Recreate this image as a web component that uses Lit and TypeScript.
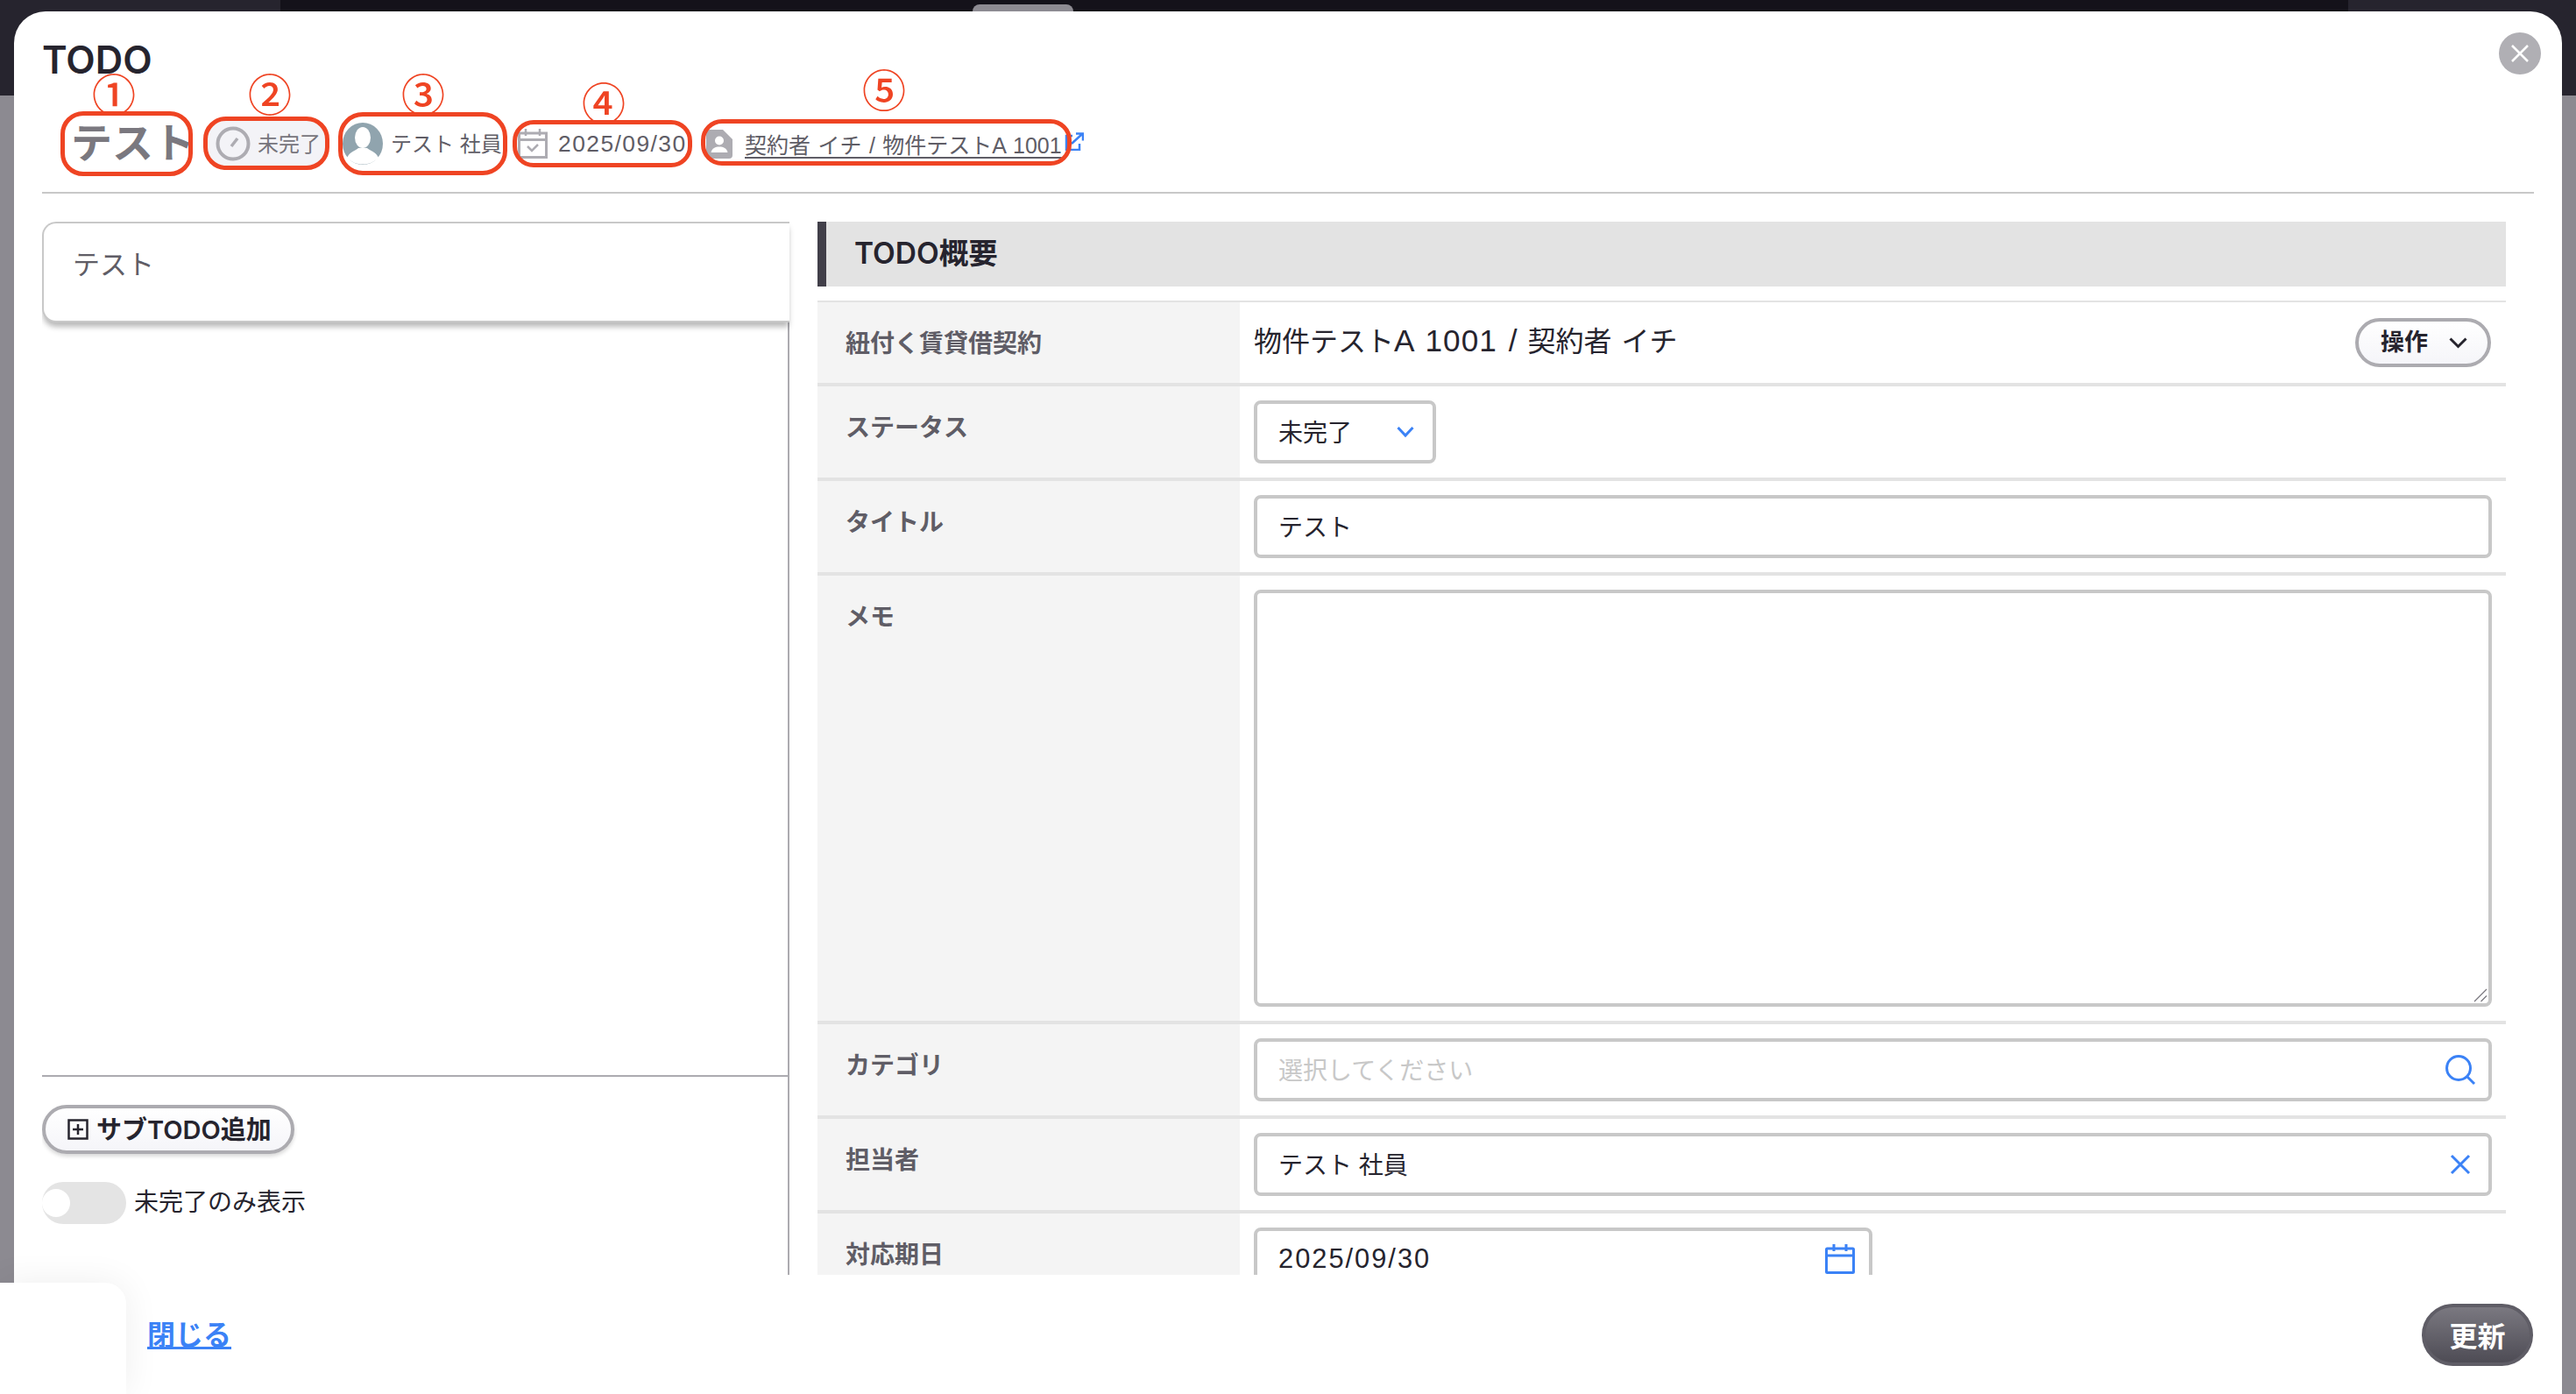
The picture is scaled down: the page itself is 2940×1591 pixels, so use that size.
import { LitElement, html, css, svg } from 'lit';
import { customElement } from 'lit/decorators.js';

const marks = [
  { x: 69, y: 127, w: 151, h: 74, r: 26 },
  { x: 232, y: 133, w: 144, h: 61, r: 26 },
  { x: 386, y: 128, w: 193, h: 72, r: 28 },
  { x: 585, y: 137, w: 205, h: 54, r: 24 },
  { x: 800, y: 136, w: 423, h: 53, r: 24 },
];

const numbers = [
  { t: '①', x: 108, y: 83 },
  { t: '②', x: 286, y: 83 },
  { t: '③', x: 461, y: 83 },
  { t: '④', x: 667, y: 93 },
  { t: '⑤', x: 987, y: 78 },
];

const chevron = svg`<path d="M1.500 2l8.500 9 8.500-9" fill="none" stroke="currentColor" stroke-width="3" />`;

@customElement('app-root')
export class AppRoot extends LitElement {
  static styles = css`
    :host {
      display: block;
      width: 2940px;
      height: 1591px;
      overflow: hidden;
      font-family: 'Liberation Sans', 'Noto Sans CJK JP', sans-serif;
      color: #26242e;
    }
    * { box-sizing: border-box; }
    .page {
      position: relative;
      width: 2940px;
      height: 1591px;
      padding: 13px 16px 0;
      background: linear-gradient(to bottom, #26242e 109px, #8c8a91 109px);
      overflow: hidden;
    }
    .topband {
      position: absolute;
      left: 320px;
      top: 0;
      width: 2360px;
      height: 13px;
      background: #14121a;
    }
    .handle {
      position: absolute;
      left: 1110px;
      top: 5px;
      width: 115px;
      height: 8px;
      background: #8d8b92;
      border-radius: 8px 8px 0 0;
    }
    .modal {
      position: relative;
      height: 1578px;
      background: #fff;
      border-radius: 36px 36px 0 0;
      padding: 33px 32px 0;
      display: flex;
      flex-direction: column;
    }
    .close {
      position: absolute;
      right: 24px;
      top: 24px;
      width: 48px;
      height: 48px;
      border-radius: 50%;
      background: #b0afb4;
      display: flex;
      align-items: center;
      justify-content: center;
    }
    h1 {
      margin: 0;
      font-family: Inter, 'Noto Sans CJK JP', sans-serif;
      font-size: 43.5px;
      line-height: 44px;
      font-weight: 600;
    }
    .chips {
      display: flex;
      align-items: center;
      height: 60px;
      margin-top: 44px;
      padding-left: 33px;
      color: #5f5d66;
      font-size: 24px;
    }
    .chips-wrap {
      border-bottom: 2px solid #c8c8c8;
      padding-bottom: 25px;
    }
    .heading {
      font-size: 47px;
      font-weight: 700;
      color: #7a787f;
      line-height: 60px;
      width: 148px;
      flex: none;
    }
    .status {
      display: flex;
      align-items: center;
      gap: 8px;
      width: 139px;
      height: 52px;
      padding-left: 11px;
      margin-left: 6px;
      border-radius: 20px;
      background: #f3f3f7;
      color: #77757c;
      font-size: 24px;
      flex: none;
    }
    .status span, .person span { position: relative; top: -2px; }
    .person {
      display: flex;
      align-items: center;
      gap: 9px;
      margin-left: 17px;
      width: 200px;
      flex: none;
    }
    .date {
      display: flex;
      align-items: center;
      gap: 12px;
      width: 215px;
      flex: none;
    }
    .date .num { letter-spacing: 0.055em; }
    .link {
      display: flex;
      align-items: center;
      gap: 14px;
      flex: none;
    }
    .link u {
      font-size: 25px;
      word-spacing: 1.500px;
      text-underline-offset: 4px;
    }
    .ext { margin-left: 3px; margin-top: -6px; color: #3b82f6; }
    .num {
      font-size: 1.1em;
      letter-spacing: 0.065em;
    }
    .main {
      flex: 1;
      min-height: 0;
      display: flex;
      gap: 32px;
      margin-top: 32px;
      overflow: hidden;
      padding-right: 32px;
    }
    .left {
      width: 853px;
      flex: none;
      display: flex;
      flex-direction: column;
      border-right: 2px solid #acabb0;
    }
    .card {
      height: 115px;
      margin-right: -2px;
      position: relative;
      background: #fff;
      border: 2px solid #c8c8c8;
      border-right: none;
      border-radius: 16px 0 0 16px;
      box-shadow: 0 6px 6px -1px rgba(0, 0, 0, 0.28);
      padding: 27px 0 0 33px;
      font-size: 31px;
      line-height: 42px;
      color: #5f5d66;
    }
    .left-bottom {
      margin-top: auto;
      height: 228px;
      border-top: 2px solid #acabb0;
      padding-top: 32px;
    }
    .add {
      display: inline-flex;
      align-items: center;
      gap: 9px;
      width: 288px;
      height: 56px;
      padding-left: 25px;
      border: 4px solid #acabb0;
      border-radius: 28px;
      background: linear-gradient(#fff, #f5f5f9);
      box-shadow: 0 3px 4px rgba(0, 0, 0, 0.15);
      font-family: Inter, 'Noto Sans CJK JP', sans-serif;
      font-size: 29px;
      font-weight: 600;
    }
    .add span { position: relative; top: -2px; }
    .toggle-row {
      display: flex;
      align-items: center;
      gap: 9px;
      margin-top: 32px;
      font-size: 28px;
    }
    .toggle-row span { position: relative; top: -3px; }
    .toggle {
      width: 96px;
      height: 48px;
      border-radius: 24px;
      background: #e4e4e4;
      display: flex;
      align-items: center;
    }
    .knob {
      width: 32px;
      height: 32px;
      border-radius: 50%;
      background: #fff;
    }
    .right {
      flex: 1;
      min-width: 0;
    }
    .title-bar {
      height: 74px;
      background: #e3e3e3;
      border-left: 10px solid #413f49;
      padding: 0 0 7px 32px;
      display: flex;
      align-items: center;
      font-family: Inter, 'Noto Sans CJK JP', sans-serif;
      font-size: 33.500px;
      font-weight: 600;
    }
    .table {
      margin-top: 16px;
      border-top: 2px solid #e3e3e3;
    }
    .row {
      display: grid;
      grid-template-columns: 482px 1fr;
      border-bottom: 4px solid #e3e3e3;
    }
    .label {
      background: #f4f4f4;
      padding: 32px 0 0 32px;
      font-size: 28px;
      line-height: 32px;
      font-weight: 700;
      color: #5f5d66;
    }
    .field {
      padding: 16px;
    }
    .field.plain {
      height: 92px;
      padding: 0 17px 0 16px;
      display: flex;
      align-items: center;
      justify-content: space-between;
      font-size: 32px;
    }
    .value {
      position: relative;
      top: -4px;
      word-spacing: 2px;
    }
    .value .num { letter-spacing: 0.03em; }
    .ops {
      display: flex;
      align-items: center;
      justify-content: space-between;
      width: 155px;
      height: 56px;
      padding: 0 23px 0 25px;
      border: 4px solid #acabb0;
      border-radius: 28px;
      background: linear-gradient(#fff, #f5f5f9);
      font-size: 27px;
      font-weight: 700;
    }
    .ops span { position: relative; top: -3px; }
    .input {
      height: 72px;
      border: 4px solid #c8c8c8;
      border-radius: 8px;
      background: #fff;
      padding: 0 14px 0 24px;
      display: flex;
      align-items: center;
      justify-content: space-between;
      font-size: 28px;
    }
    .input .text { position: relative; top: -1px; }
    .input.small { width: 208px; padding-right: 21px; }
    .input.date-input { width: 706px; padding-right: 16px; }
    .blue { color: #3b82f6; flex: none; }
    .placeholder { color: #c8c8c8; }
    .memo {
      height: 476px;
      position: relative;
      border: 4px solid #c8c8c8;
      border-radius: 8px;
      background: #fff;
    }
    .grip {
      position: absolute;
      right: 1px;
      bottom: 1px;
    }
    .footer {
      height: 136px;
      flex: none;
      display: flex;
      align-items: center;
      justify-content: space-between;
      background: #fff;
      padding: 0 1px 0 120px;
    }
    .footer a {
      position: relative;
      top: -2px;
      color: #3b82f6;
      font-size: 32px;
      font-weight: 700;
      text-decoration: underline;
    }
    .update {
      width: 127px;
      height: 71px;
      border-radius: 36px;
      border: 4px solid #5f5d66;
      background: linear-gradient(#7a7880, #4e4c55);
      color: #fff;
      font-size: 32px;
      font-weight: 700;
      display: flex;
      align-items: center;
      justify-content: center;
    }
    .corner {
      position: absolute;
      left: 0;
      bottom: 0;
      width: 144px;
      height: 127px;
      background: #fff;
      border-top-right-radius: 24px;
      box-shadow: 0 0 40px rgba(0, 0, 0, 0.07);
    }
    .mark {
      position: absolute;
      border: 5px solid #ef4423;
    }
    .number {
      position: absolute;
      width: 44px;
      height: 44px;
      display: flex;
      align-items: center;
      justify-content: center;
      font-family: 'Noto Sans CJK JP', sans-serif;
      font-size: 50px;
      line-height: 44px;
      font-weight: 500;
      color: #ef4423;
    }
    svg { display: block; flex: none; }
  `;

  field(label: string, body: unknown) {
    return html`<div class="row">
      <div class="label">${label}</div>
      <div class="field">${body}</div>
    </div>`;
  }

  render() {
    return html`
      <div class="page">
        <div class="topband"></div>
        <div class="handle"></div>
        <div class="modal">
          <div class="close">
            <svg width="20" height="20" viewBox="0 0 20 20"><path d="M1 1l18 18M19 1L1 19" stroke="#fff" stroke-width="2.5" /></svg>
          </div>
          <div class="chips-wrap">
            <h1>TODO</h1>
            <div class="chips">
              <div class="heading">テスト</div>
              <div class="status">
                <svg width="40" height="40" viewBox="0 0 40 40">
                  <circle cx="20" cy="20" r="17.5" fill="none" stroke="#adacb2" stroke-width="4" />
                  <path d="M18 23l7-9" stroke="#adacb2" stroke-width="3.5" />
                </svg>
                <span>未完了</span>
              </div>
              <div class="person">
                <svg width="46" height="48" viewBox="0 0 46 48">
                  <ellipse cx="23" cy="24" rx="23" ry="24" fill="#90a4ae" />
                  <ellipse cx="23" cy="17" rx="9" ry="12" fill="#fff" />
                  <path d="M5 40c3-7 10-8 13-11h10c3 3 10 4 13 11-5 5-11 7.500-18 7.500S10 45 5 40z" fill="#fff" />
                </svg>
                <span>テスト 社員</span>
              </div>
              <div class="date">
                <svg width="34" height="34" viewBox="0 0 34 34" fill="none" stroke="#adacb2">
                  <rect x="1.500" y="5" width="31" height="27.500" stroke-width="3" />
                  <path d="M1.500 12.500h31" stroke-width="3" />
                  <path d="M9 0v8M25 0v8" stroke-width="2.500" />
                  <path d="M11 20l5 5 7-7" stroke-width="2.500" />
                </svg>
                <span class="num">2025/09/30</span>
              </div>
              <div class="link">
                <svg width="30" height="33" viewBox="0 0 30 33">
                  <path d="M4 0h15l11 11v18a4 4 0 0 1-4 4H4a4 4 0 0 1-4-4V4a4 4 0 0 1 4-4z" fill="#adacb2" />
                  <circle cx="15" cy="12.500" r="5" fill="#fff" />
                  <path d="M5.500 26c1-5 5-6.500 9.500-6.500s8.500 1.500 9.500 6.500z" fill="#fff" />
                </svg>
                <u>契約者 イチ / 物件テストA 1001</u>
              </div>
              <div class="ext">
                <svg width="22" height="21" viewBox="0 0 22 21" fill="none" stroke="currentColor" stroke-width="2.500">
                  <path d="M9 4H2v16h15v-7" />
                  <path d="M8 13L20 2M13 1.500h8v8" />
                </svg>
              </div>
            </div>
          </div>
          <div class="main">
            <div class="left">
              <div class="card">テスト</div>
              <div class="left-bottom">
                <div class="add">
                  <svg width="24" height="24" viewBox="0 0 24 24" fill="none" stroke="#26242e" stroke-width="2.500">
                    <rect x="1.500" y="1.500" width="21" height="21" />
                    <path d="M12 6v12M6 12h12" />
                  </svg>
                  <span>サブTODO追加</span>
                </div>
                <div class="toggle-row">
                  <div class="toggle"><div class="knob"></div></div>
                  <span>未完了のみ表示</span>
                </div>
              </div>
            </div>
            <div class="right">
              <div class="title-bar">TODO概要</div>
              <div class="table">
                <div class="row">
                  <div class="label">紐付く賃貸借契約</div>
                  <div class="field plain">
                    <span class="value">物件テスト<span class="num">A 1001 /</span> 契約者 イチ</span>
                    <div class="ops">
                      <span>操作</span>
                      <svg width="21" height="13" viewBox="0 0 21 13"><path d="M1.500 1.500l9 9 9-9" fill="none" stroke="#26242e" stroke-width="3" /></svg>
                    </div>
                  </div>
                </div>
                ${this.field('ステータス', html`<div class="input small"><span class="text">未完了</span>
                  <svg class="blue" width="20" height="14" viewBox="0 0 20 14">${chevron}</svg></div>`)}
                ${this.field('タイトル', html`<div class="input"><span class="text">テスト</span></div>`)}
                ${this.field('メモ', html`<div class="memo">
                  <svg class="grip" width="16" height="16" viewBox="0 0 16 16" fill="none" stroke="#77757c" stroke-width="1.200">
                    <path d="M1 15L15 1M8.500 15L15 8.500" />
                  </svg>
                </div>`)}
                ${this.field('カテゴリ', html`<div class="input"><span class="placeholder text">選択してください</span>
                  <svg class="blue" width="36" height="36" viewBox="0 0 36 36" fill="none" stroke="currentColor" stroke-width="3">
                    <circle cx="16" cy="16" r="13.500" /><path d="M26 26l8 8" />
                  </svg></div>`)}
                ${this.field('担当者', html`<div class="input"><span class="text">テスト 社員</span>
                  <svg class="blue" width="36" height="24" viewBox="0 0 36 24"><path d="M8 2l20 20M28 2L8 22" stroke="currentColor" stroke-width="3" /></svg></div>`)}
                ${this.field('対応期日', html`<div class="input date-input"><span class="num">2025/09/30</span>
                  <svg class="blue" width="34" height="34" viewBox="0 0 34 34" fill="none" stroke="currentColor" stroke-width="3">
                    <rect x="1.500" y="5" width="31" height="27.500" rx="1" />
                    <path d="M1.500 13h31M10 0v8M24 0v8" />
                  </svg></div>`)}
              </div>
            </div>
          </div>
          <div class="footer">
            <a>閉じる</a>
            <div class="update">更新</div>
          </div>
        </div>
        <div class="corner"></div>
        ${marks.map(
          (m) => html`<div class="mark" style="left:${m.x}px;top:${m.y}px;width:${m.w}px;height:${m.h}px;border-radius:${m.r}px"></div>`
        )}
        ${numbers.map((n) => html`<div class="number" style="left:${n.x}px;top:${n.y}px">${n.t}</div>`)}
      </div>
    `;
  }
}
